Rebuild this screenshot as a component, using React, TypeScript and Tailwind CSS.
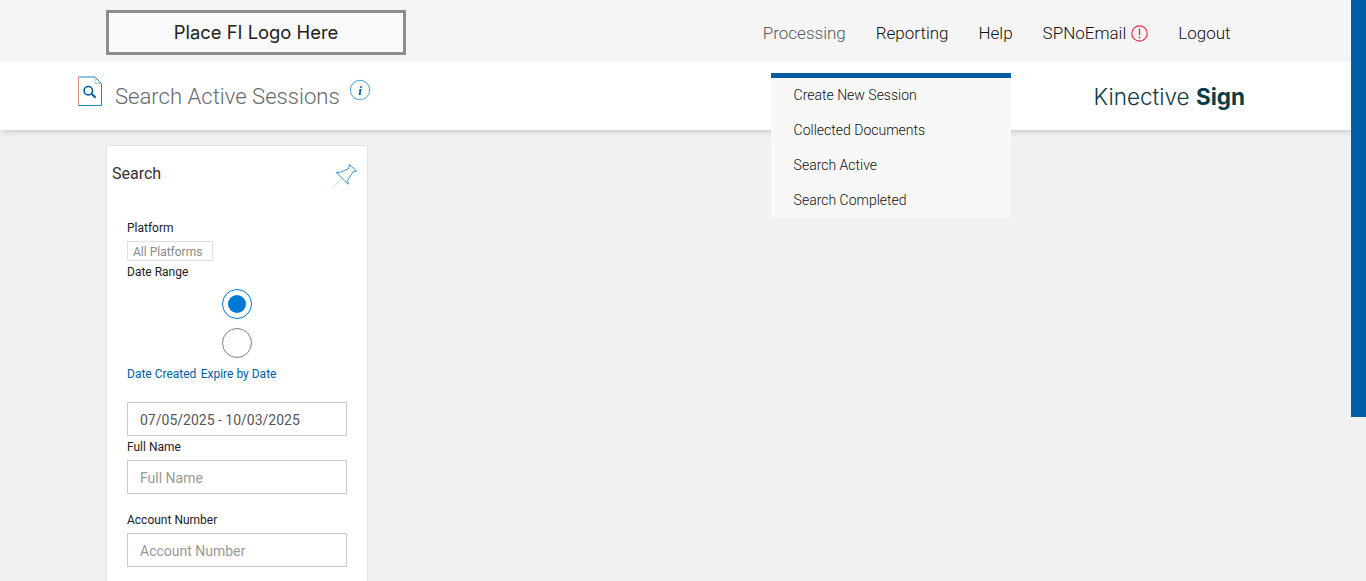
export default function App() {
  const nav = [
    { t: "Processing", c: "text-[#555a60]" },
    { t: "Reporting", c: "text-[#111]" },
    { t: "Help", c: "text-[#111]" },
  ];
  const menu = ["Create New Session", "Collected Documents", "Search Active", "Search Completed"];
  return (
    <div className="relative h-[581px] overflow-hidden bg-[#f1f1f1] font-['Roboto',sans-serif]">
      <div className="absolute right-0 top-0 z-20 h-[417px] w-[15px] bg-[#005da6]" />
      <header className="flex h-[62px] items-start bg-[#f5f5f5] pl-[106px]">
        <div className="mt-[10px] flex h-[45px] w-[300px] items-center justify-center border-[3px] border-[#8c8c8c] bg-[#fafafa] font-['Inter',sans-serif] text-[18.4px] text-[#222]">
          Place FI Logo Here
        </div>
        <nav className="ml-[356.8px] mt-[23px] flex items-center gap-[30px] text-[17px] font-light leading-5">
          {nav.map((n) => (
            <span key={n.t} className={n.c}>{n.t}</span>
          ))}
          <span className="flex items-center gap-[5px] text-[#111]">
            SPNoEmail
            <svg width="17" height="17" viewBox="0 0 17 17" fill="none" stroke="#ed2f4f" strokeWidth="1.2">
              <circle cx="8.5" cy="8.5" r="7.7" />
              <path d="M8.5 3.5v6.5M8.5 11.6v1.6" strokeWidth="1.4" />
            </svg>
          </span>
          <span className="text-[#111]">Logout</span>
        </nav>
      </header>
      <div className="relative z-10 flex h-[68px] items-start bg-white pl-[78px] shadow-[0_4px_6px_-2px_rgba(0,0,0,0.16)]">
        <svg className="mt-[14px]" width="24" height="30" viewBox="0 0 24 30" fill="none">
          <path d="M.5 1H17l6.5 6.5v22H.5z" stroke="#1b87c9" strokeWidth="1" />
          <path d="M.5 1v28.5" stroke="#d9917f" strokeWidth="1" />
          <path d="M17 1v6.5h6.5" stroke="#9cc5e0" strokeWidth="1" />
          <circle cx="10.3" cy="14.7" r="4.2" stroke="#005da6" strokeWidth="1.6" />
          <path d="M13.4 17.8l4.3 3.9" stroke="#005da6" strokeWidth="1.9" />
        </svg>
        <h1 className="ml-[13px] mt-[20px] h-[28px] text-[22.1px] font-light leading-[29px] text-[#666a6e]">Search Active Sessions</h1>
        <svg className="ml-[9px] mt-[17px]" width="22" height="22" viewBox="0 0 22 22" fill="none">
          <circle cx="11" cy="11" r="9.7" stroke="#4f9fd0" strokeWidth="1" />
          <text x="11" y="15.5" textAnchor="middle" fontFamily="Liberation Serif, serif" fontStyle="italic" fontWeight="700" fontSize="13" fill="#0b5c9c">i</text>
        </svg>
        <div className="ml-auto mr-[121px] mt-[21px] font-['Inter',sans-serif] text-[22.5px] font-light leading-7 text-[#0b3d45]">
          Kinective <span className="font-bold">Sign</span>
        </div>
      </div>
      <div className="absolute left-[771px] top-[73px] z-30 h-[145px] w-[240px] border-t-[5px] border-[#005da6] bg-[#f8f8f8] pl-[22.6px] text-[14px] font-light text-[#111]">
        {menu.map((m) => (
          <div key={m} className="flex h-[35px] items-center">{m}</div>
        ))}
      </div>
      <main className="ml-[106px] mt-[15px] h-[500px] w-[262px] border border-[#e3e3e3] bg-white">
        <div className="flex h-[73px] items-start justify-between pl-[5px] pr-[9px]">
          <span className="mt-[18px] text-[16px] leading-5 text-[#333]">Search</span>
          <svg className="mt-[17px]" width="26" height="27" viewBox="0 0 26 27" fill="none">
            <path d="M17 1.3L24.7 8l-3.4.7L15.7 17l.6 4.3L4 9.3h4.7L17 5.3z" stroke="#3b9ad6" strokeWidth="1" strokeLinejoin="round" />
            <path d="M10 15L.5 25" stroke="#b6dcf0" strokeWidth="1" />
          </svg>
        </div>
        <div className="px-[20px] text-[12px] text-[#222]">
          <div className="h-[18px] leading-[18px]">Platform</div>
          <div className="mt-[4px] flex h-[20px] w-[86px] items-center border border-[#e0e0e0] pl-[5px] pt-[2px] text-[#8a8a8a]">All Platforms</div>
          <div className="mt-[2px] h-[18px] leading-[18px]">Date Range</div>
          <div className="mt-[8px] flex flex-col items-center gap-[9px]">
            <div className="flex h-[30px] w-[30px] items-center justify-center rounded-full border border-[#0078d4]">
              <div className="h-[18px] w-[18px] rounded-full bg-[#0078d4]" />
            </div>
            <div className="h-[30px] w-[30px] rounded-full border border-[#808080]" />
          </div>
          <div className="mt-[7px] flex h-[18px] gap-[4.3px] leading-[18px] text-[#005da6]">
            <span>Date Created</span>
            <span>Expire by Date</span>
          </div>
          <div className="mt-[19px] flex h-[34px] items-center border border-[#cccccc] pl-[12px] pt-[2px] text-[14px] text-[#555]">07/05/2025 - 10/03/2025</div>
          <div className="mt-[2px] h-[18px] leading-[18px]">Full Name</div>
          <div className="mt-[4px] flex h-[34px] items-center border border-[#cccccc] pl-[12px] pt-[2px] text-[14px] text-[#999]">Full Name</div>
          <div className="mt-[17px] h-[18px] leading-[18px]">Account Number</div>
          <div className="mt-[4px] flex h-[34px] items-center border border-[#cccccc] pl-[12px] pt-[2px] text-[14px] text-[#999]">Account Number</div>
        </div>
      </main>
    </div>
  );
}
